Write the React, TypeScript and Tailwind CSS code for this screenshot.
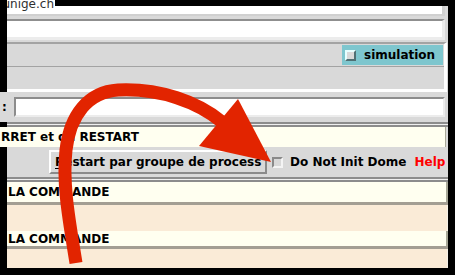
import React from "react";

function Check({ light = "#ffffff", dark = "#7a7a7a" }: { light?: string; dark?: string }) {
  return (
    <div
      className="h-[11px] w-[11px] shrink-0 border-2 bg-[#d9d9d9]"
      style={{ borderTopColor: light, borderLeftColor: light, borderBottomColor: dark, borderRightColor: dark }}
    />
  );
}

export default function App() {
  return (
    <div className="relative h-[275px] w-[455px] overflow-hidden bg-black font-['DejaVu_Sans',sans-serif] text-[12px] leading-none text-black">
      <div className="ml-[7px] mt-[6px] flex h-[262px] w-[441px] flex-col bg-[#d9d9d9]">
        {/* host field */}
        <div className="h-[10px] w-[438px] border-b-2 border-r-[3px] border-[#d0d0d0] bg-white" />
        <div className="h-[3px] shrink-0" />
        {/* second entry */}
        <div className="h-[21px] w-[438px] border-t-2 border-r-[3px] border-b-[3px] border-t-[#8f8f8f] border-r-[#ececec] border-b-[#ececec] bg-white" />
        <div className="h-[2px] shrink-0" />

        {/* simulation frame */}
        <div className="flex h-[50px] w-[440px] flex-col border-t-2 border-r-[3px] border-b-[3px] border-t-[#a3a3a3] border-r-white border-b-white">
          <div className="flex h-[22px] items-center justify-end pr-[1px]">
            <div className="flex h-[20px] w-[101px] items-center bg-[#7ec6ce] pl-[3px]">
              <Check light="#e6ffff" dark="#4f6f73" />
              <span className="ml-[8px] font-bold">simulation</span>
            </div>
          </div>
          <div className="h-px bg-[#a3a3a3]" />
          <div className="h-[22px]" />
        </div>

        {/* entry row */}
        <div className="-ml-[7px] flex h-[30px] w-[448px] shrink-0 items-center bg-[#d9d9d9]">
          <span className="w-[14px] pl-[2px] font-bold">:</span>
          <div className="h-[20px] w-[431px] border-2 border-t-[#8c8c8c] border-l-[#8c8c8c] border-b-[#ececec] border-r-[#ececec] bg-white" />
        </div>

        {/* groove */}
        <div className="h-[2px] w-[441px] bg-[#8c8c8c]" />
        <div className="h-px w-[441px] bg-[#efefef]" />
        <div className="h-[2px] w-[441px] bg-[#8c8c8c]" />

        {/* arret / restart */}
        <div className="-ml-[7px] flex h-[20px] w-[446px] shrink-0 items-center border-r border-[#a8a898] bg-[#fffff0] pl-[1px] font-bold">
          RRET et du RESTART
        </div>
        <div className="flex h-[30px] shrink-0 items-center font-bold">
          <div className="ml-[42px] flex h-[24px] w-[218px] items-center border-2 border-t-white border-l-white border-b-[#8a8a8a] border-r-[#8a8a8a] pl-[4px]">
            <span className="underline underline-offset-2">R</span>estart par groupe de process
          </div>
          <div className="ml-[5px]">
            <Check light="#8a8a8a" dark="#f4f4f4" />
          </div>
          <span className="ml-[7px]">Do Not Init Dome</span>
          <span className="ml-[8px] text-[#ff0000]">Help</span>
        </div>

        {/* groove */}
        <div className="h-[2px] w-[441px] bg-[#8c8c8c]" />
        <div className="h-px w-[441px] bg-[#efefef]" />
        <div className="h-[2px] w-[441px] bg-[#8c8c8c]" />

        {/* commande 1 */}
        <div className="flex h-[20px] w-[441px] shrink-0 items-center border-r-2 border-[#a8a898] bg-[#fffff0] pl-[1px] font-bold">
          LA COMMANDE
        </div>
        <div className="h-[3px] w-[441px] bg-[#a39e93]" />
        <div className="h-[26px] w-[441px] border-r border-[#f4f0e8] bg-[#faebd7]" />

        {/* commande 2 */}
        <div className="flex h-[15px] w-[441px] shrink-0 items-end border-r-2 border-[#a8a898] bg-[#fffff0] pb-[1px] pl-[1px] font-bold">
          LA COMMANDE
        </div>
        <div className="h-[3px] w-[441px] bg-[#a39e93]" />
        <div className="h-[19px] w-[441px] border-r border-[#f4f0e8] bg-[#faebd7]" />
      </div>

      {/* host text spilling over the frame */}
      <div className="absolute left-[7px] top-0 flex h-[12px] w-[48px] justify-end overflow-hidden bg-white pr-[1px]">
        <span className="-mt-[2px] text-[#303030]">unige.ch</span>
      </div>

      {/* red annotation arrow */}
      <svg className="pointer-events-none absolute left-0 top-0" width="455" height="275" viewBox="0 0 455 275">
        <path
          d="M 76 263 C 70 225, 62 185, 66 150 C 70 115, 88 92, 118 90 C 160 88, 198 102, 222 122"
          fill="none"
          stroke="#e22400"
          strokeWidth="13"
        />
        <polygon points="238,99 199,146 271,162" fill="#e22400" />
      </svg>
    </div>
  );
}
